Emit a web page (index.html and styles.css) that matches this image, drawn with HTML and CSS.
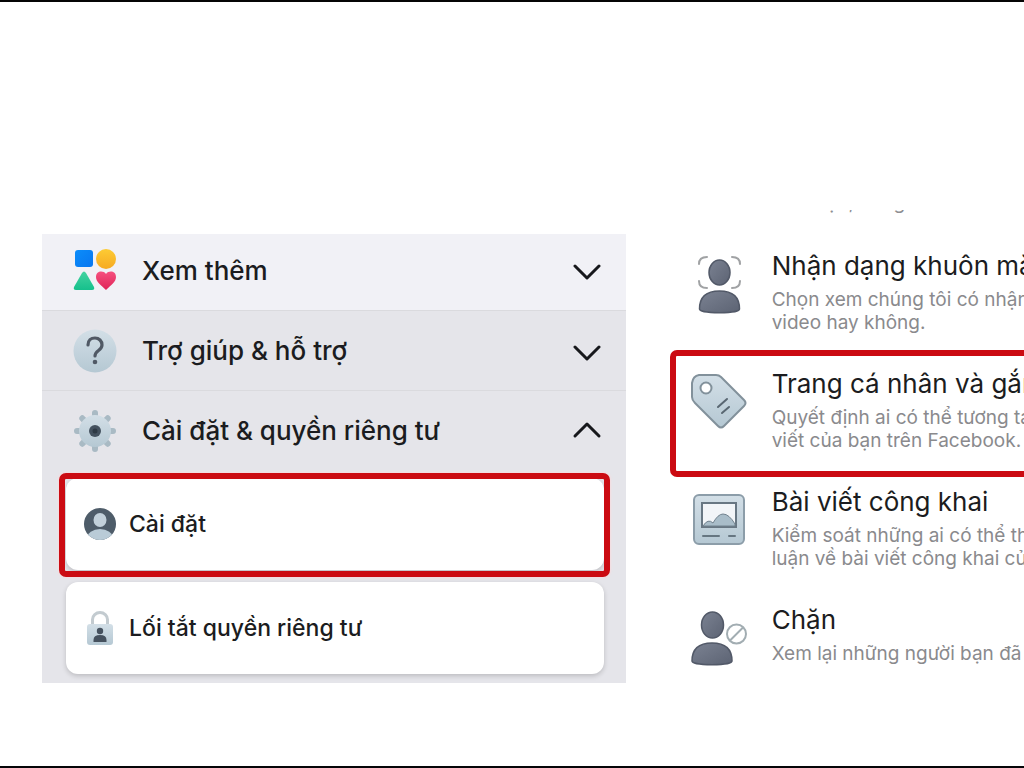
FILE: index.html
```html
<!DOCTYPE html>
<html lang="vi">
<head>
<meta charset="utf-8">
<title>Cài đặt &amp; quyền riêng tư</title>
<link rel="stylesheet" href="styles.css">
</head>
<body>
<main class="page">
  <nav class="menu">
    <button class="row row-light" type="button">
      <svg class="row-icon" viewBox="0 0 44 44" aria-hidden="true">
        <defs>
          <linearGradient id="blue" x2="1" y2="1"><stop stop-color="#0b8dfa"/><stop offset="1" stop-color="#0876f0"/></linearGradient>
          <linearGradient id="gold" x2="0" y2="1"><stop stop-color="#fdcb34"/><stop offset="1" stop-color="#f6aa22"/></linearGradient>
          <linearGradient id="green" x2="0" y2="1"><stop stop-color="#43d3a0"/><stop offset="1" stop-color="#16c08c"/></linearGradient>
          <linearGradient id="pink" x2="0" y2="1"><stop stop-color="#f5507f"/><stop offset="1" stop-color="#df2457"/></linearGradient>
          <linearGradient id="pale" x2="0" y2="1"><stop stop-color="#d3dfe7"/><stop offset="1" stop-color="#b5c8d3"/></linearGradient>
          <linearGradient id="slate" x2="1" y2="1"><stop stop-color="#7b8292"/><stop offset="1" stop-color="#5c6373"/></linearGradient>
        </defs>
        <rect x="2" y="2" width="18" height="17" rx="3" fill="url(#blue)"/>
        <circle cx="33" cy="11" r="10" fill="url(#gold)"/>
        <path d="M9 25q2-3 4 0l8 14q1 3-2 3H3q-3 0-2-3z" fill="url(#green)"/>
        <path d="M33 26c3-4 10-3 10 3 0 5-5 8-10 13-5-5-10-8-10-13 0-6 7-7 10-3z" fill="url(#pink)"/>
      </svg>
      <span class="row-label">Xem thêm</span>
      <svg class="chevron" viewBox="0 0 30 20" aria-hidden="true"><path d="M3 6l12 12L27 6"/></svg>
    </button>
    <button class="row" type="button">
      <svg class="row-icon" viewBox="0 0 44 44" aria-hidden="true">
        <circle cx="22" cy="22" r="21.500" fill="url(#pale)"/>
        <path d="M15 16c0-5 3-7 7-7s7 3 7 7c0 6-7 5-7 11" fill="none" stroke="#505965" stroke-width="3.200" stroke-linecap="round"/>
        <circle cx="22" cy="33" r="2.300" fill="#505965"/>
      </svg>
      <span class="row-label">Trợ giúp &amp; hỗ trợ</span>
      <svg class="chevron" viewBox="0 0 30 20" aria-hidden="true"><path d="M3 6l12 12L27 6"/></svg>
    </button>
    <button class="row" type="button" aria-expanded="true">
      <svg class="row-icon" viewBox="0 0 44 44" aria-hidden="true">
        <g stroke="#a9bac4" stroke-width="6" stroke-linecap="round">
          <path d="M22 4v36M4 22h36M9.300 9.300l25.400 25.400M34.700 9.300L9.300 34.700"/>
        </g>
        <circle cx="22" cy="22" r="16" fill="url(#pale)"/>
        <circle cx="22" cy="22" r="6" fill="#44525f"/>
        <circle cx="22" cy="22" r="2.500" fill="#2e3a45"/>
      </svg>
      <span class="row-label">Cài đặt &amp; quyền riêng tư</span>
      <svg class="chevron" viewBox="0 0 30 20" aria-hidden="true"><path d="M3 15L15 3l12 12"/></svg>
    </button>
    <div class="cards">
      <button class="card marked" type="button">
        <svg class="card-icon" viewBox="0 0 34 34" aria-hidden="true">
          <clipPath id="disc"><circle cx="17" cy="17" r="16"/></clipPath>
          <circle cx="17" cy="17" r="16" fill="#4e5c69"/>
          <ellipse cx="17" cy="31" rx="13" ry="9" fill="#b9cbd7" clip-path="url(#disc)"/>
          <ellipse cx="17" cy="13" rx="6.500" ry="7" fill="#c2d0da"/>
        </svg>
        <span>Cài đặt</span>
      </button>
      <button class="card" type="button">
        <svg class="card-icon" viewBox="0 0 34 34" aria-hidden="true">
          <path d="M9.500 15V8.500a7.500 7 0 0 1 15 0V15" fill="none" stroke="#c3cbd0" stroke-width="3"/>
          <rect x="4" y="13" width="26" height="21" rx="3" fill="url(#pale)"/>
          <circle cx="17" cy="20" r="3.200" fill="#45515e"/>
          <path d="M10.500 31v-2q0-5 6.500-5t6.500 5v2z" fill="#45515e"/>
        </svg>
        <span>Lối tắt quyền riêng tư</span>
      </button>
    </div>
  </nav>

  <section class="settings">
    <p class="cut-line">xem bạn, riêng</p>
    <ul class="list">
      <li class="item">
        <svg class="item-icon" viewBox="0 0 60 66" aria-hidden="true">
          <g fill="none" stroke="#a0a2a4" stroke-width="2" stroke-linecap="round">
            <path d="M10 11q0-7 8-7M43 4q8 0 8 7M10 28q0 7 8 7M43 35q8 0 8-7"/>
          </g>
          <g fill="url(#slate)" stroke="#525968" stroke-width="1.500">
            <ellipse cx="30.500" cy="19.500" rx="10.500" ry="12.500"/>
            <path d="M10.500 56c0-12 7-18 20-18s20 6 20 18c0 5-40 5-40 0z"/>
          </g>
        </svg>
        <div class="item-text">
          <h2 class="item-title">Nhận dạng khuôn mặt</h2>
          <p class="item-desc">Chọn xem chúng tôi có nhận<br>video hay không.</p>
        </div>
      </li>
      <li class="item item-marked">
        <svg class="item-icon" viewBox="0 0 60 66" aria-hidden="true">
          <path d="M10 4h17q3 0 5 2l23 23q3 3 0 6L35 55q-3 3-6 0L6 32q-3-3-3-6V12q1-7 7-8z" fill="url(#pale)" stroke="#82919b" stroke-width="2"/>
          <circle cx="17" cy="17" r="5.500" fill="#fff" stroke="#82919b" stroke-width="2"/>
          <path d="M29 36l9-8M33 42l7-6" stroke="#596772" stroke-width="2" stroke-linecap="round"/>
        </svg>
        <div class="item-text">
          <h2 class="item-title">Trang cá nhân và gắn</h2>
          <p class="item-desc">Quyết định ai có thể tương tá<br>viết của bạn trên Facebook.</p>
        </div>
      </li>
      <li class="item">
        <svg class="item-icon" viewBox="0 0 60 66" aria-hidden="true">
          <rect x="5" y="6" width="50" height="49" rx="5" fill="url(#pale)" stroke="#8c9da9" stroke-width="2"/>
          <rect x="13" y="14" width="34" height="24" fill="#f2f5f8" stroke="#687783" stroke-width="2"/>
          <path d="M14 37q5-8 10-3 5-9 10-9 6 0 12 10v2z" fill="#a9bdc9" stroke="#71828e"/>
          <path d="M14 47h16M40 47h6" stroke="#667681" stroke-width="2" stroke-linecap="round"/>
        </svg>
        <div class="item-text">
          <h2 class="item-title">Bài viết công khai</h2>
          <p class="item-desc">Kiểm soát những ai có thể th<br>luận về bài viết công khai củ</p>
        </div>
      </li>
      <li class="item">
        <svg class="item-icon" viewBox="0 0 60 66" aria-hidden="true">
          <g fill="url(#slate)" stroke="#525968" stroke-width="1.500">
            <ellipse cx="23.500" cy="18" rx="11" ry="13"/>
            <path d="M3 54c0-12 7-18 20-18s20 6 20 18c0 5-40 5-40 0z"/>
          </g>
          <g fill="none" stroke="#a2adb2" stroke-width="2"><circle cx="47.500" cy="27" r="9.500"/><path d="M41 33.500l13-13"/></g>
        </svg>
        <div class="item-text">
          <h2 class="item-title">Chặn</h2>
          <p class="item-desc">Xem lại những người bạn đã</p>
        </div>
      </li>
    </ul>
  </section>
</main>
</body>
</html>
```
FILE: styles.css
```css
* {
  box-sizing: border-box;
}

body {
  margin: 0;
  background: #fff;
  color: #1b1c20;
  font-family: Inter, "Noto Sans", sans-serif;
  overflow: hidden;
}

button {
  border: 0;
  font: inherit;
  color: inherit;
  text-align: left;
  cursor: pointer;
}

svg {
  display: block;
  flex: none;
}

.page {
  display: grid;
  grid-template-columns: 57vw minmax(0, 1fr);
  align-items: start;
  column-gap: 44px;
  min-height: 100vh;
  padding: 208px 0 0 42px;
  border-top: 2px solid #050505;
  border-bottom: 2px solid #050508;
}

.menu {
  margin-top: 24px;
  background: #e5e5ea;
}

.row {
  display: flex;
  align-items: center;
  gap: 25px;
  width: 100%;
  height: 80px;
  padding: 0 24px 0 31px;
  background: #e5e5ea;
  border-top: 1px solid #dadade;
  font-size: 26px;
  font-weight: 500;
}

.row-light {
  height: 76px;
  padding-bottom: 4px;
  background: #f1f1f6;
  border-top: 0;
}

.row-icon {
  width: 44px;
  height: 44px;
}

.row-label {
  flex: 1;
}

.chevron {
  width: 30px;
  height: 20px;
  fill: none;
  stroke: #17181c;
  stroke-width: 3;
  stroke-linecap: round;
  stroke-linejoin: round;
}

.cards {
  display: grid;
  gap: 12px;
  padding: 8px 22px 9px 24px;
}

.card {
  position: relative;
  display: flex;
  align-items: center;
  gap: 12px;
  height: 92px;
  padding: 0 17px;
  background: #fff;
  border-radius: 12px;
  box-shadow: 0 2px 5px #0000002e;
  font-size: 23px;
  font-weight: 500;
}

.card-icon {
  width: 34px;
  height: 34px;
}

.marked::after {
  content: "";
  position: absolute;
  inset: -5px -6px -7px -7px;
  border: 6px solid #cb0b12;
  border-radius: 7px;
  box-shadow: 0 0 2px 1px #f6dcdf;
}

.settings {
  min-width: 0;
}

.cut-line {
  display: flex;
  align-items: flex-end;
  height: 4px;
  margin: 0 0 22px 102px;
  overflow: hidden;
  color: #8e8e92;
  font-size: 19px;
  line-height: 23px;
}

.list {
  margin: 0;
  padding: 0;
  list-style: none;
}

.item {
  position: relative;
  display: flex;
  gap: 23px;
  height: 118px;
  padding: 15px 0 0 19px;
}

.item-marked::after {
  content: "";
  position: absolute;
  inset: -4px -8px -5px 0;
  border: 6px solid #cb0b12;
  border-radius: 7px;
}

.item-icon {
  width: 60px;
  height: 66px;
  margin-top: 2px;
}

.item-text {
  min-width: 0;
  white-space: nowrap;
}

.item-title {
  margin: 0 0 7px;
  font-size: 26px;
  font-weight: 400;
  line-height: 30px;
}

.item-desc {
  margin: 0;
  color: #8a8a8d;
  font-size: 19px;
  line-height: 23px;
}
```
